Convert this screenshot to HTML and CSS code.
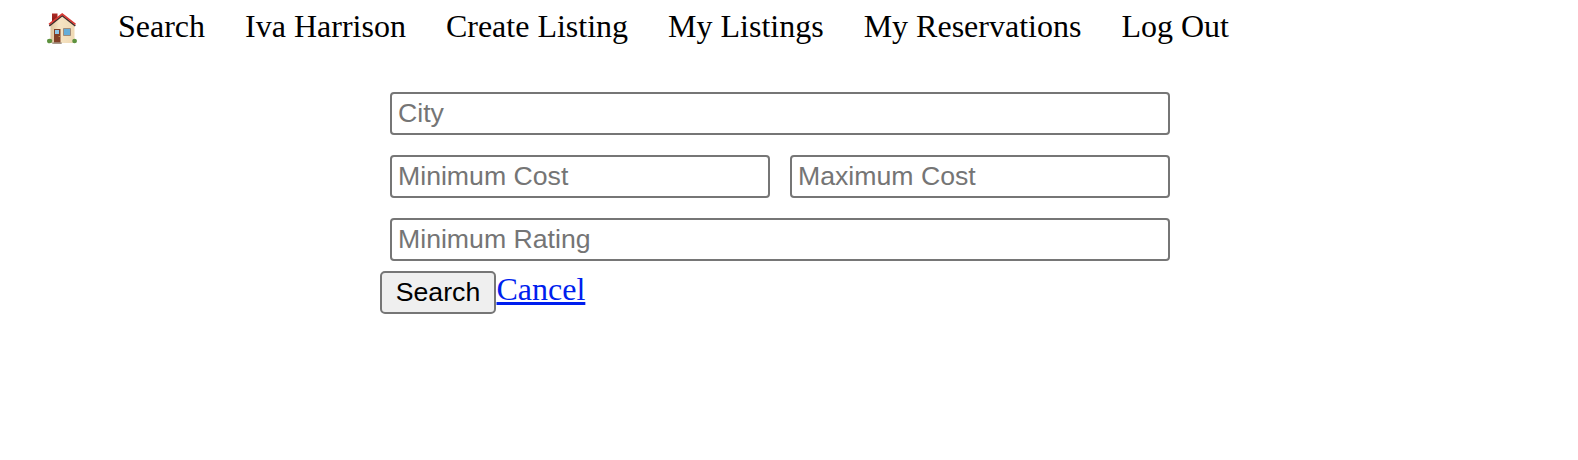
FILE: index.html
```html
<!DOCTYPE html>
<html lang="en">
<head>
<meta charset="utf-8">
<title>Search Listings</title>
<link rel="stylesheet" href="styles.css">
</head>
<body>
<nav class="nav">
  <a class="home" href="#" aria-label="Home">
    <svg class="home-icon" viewBox="0 0 30 31">
      <defs>
        <linearGradient id="wall" x1="0" x2="1" y1="0" y2="0"><stop offset="0" stop-color="#dcc39b"/><stop offset=".35" stop-color="#f6e4c4"/><stop offset="1" stop-color="#efd9b4"/></linearGradient>
        <linearGradient id="chimney" x1="0" x2="0" y1="0" y2="1"><stop offset="0" stop-color="#b02a25"/><stop offset="1" stop-color="#7b1b18"/></linearGradient>
      </defs>
      <path d="M5 .5h5.500v9H5z" fill="url(#chimney)"/>
      <path d="M3.500 12 15.300 2 27.500 12V30H3.500z" fill="url(#wall)"/>
      <ellipse cx="2.600" cy="28" rx="2.600" ry="2.300" fill="#5d923f"/>
      <ellipse cx="27.600" cy="28" rx="2.400" ry="2.300" fill="#5d923f"/>
      <path d="M2.300 12.800 15.200 2.600 28.300 12.800" fill="none" stroke="#3c2d2c" stroke-width="1.500"/>
      <path d="M2 11.400 15.200 1 28.500 11.400" fill="none" stroke="#d93a34" stroke-width="1.600"/>
      <path d="M7 16h6.500V30H7z" fill="#824027"/>
      <path d="M8 17h4v4H8z" fill="#8dc6e8"/>
      <circle cx="12.200" cy="23.500" r=".6" fill="#e7bd62"/>
      <path d="M16.500 15.500h7v7h-7z" fill="#65add9" stroke="#a08c7a" stroke-width="1"/>
      <path d="M5.300 29.300h9.400V31H5.300z" fill="#a7988a"/>
    </svg>
  </a>
  <a href="#">Search</a>
  <a href="#">Iva Harrison</a>
  <a href="#">Create Listing</a>
  <a href="#">My Listings</a>
  <a href="#">My Reservations</a>
  <a href="#">Log Out</a>
</nav>
<form class="search-form">
  <div class="fields">
    <input class="field wide" type="text" placeholder="City">
    <input class="field" type="text" placeholder="Minimum Cost">
    <input class="field" type="text" placeholder="Maximum Cost">
    <input class="field wide" type="text" placeholder="Minimum Rating">
  </div>
  <div class="actions">
    <button class="submit" type="button">Search</button>
    <a class="cancel" href="#">Cancel</a>
  </div>
</form>
</body>
</html>
```
FILE: styles.css
```css
body {
  margin: 0;
  background: #fff;
  font: 32px/36px "Liberation Serif", "Times New Roman", serif;
}
.nav {
  display: flex;
  gap: 40px;
  padding: 8px 0 0 47px;
  height: 83px;
  box-sizing: border-box;
}
.nav a {
  color: #000;
  text-decoration: none;
  white-space: nowrap;
}
.nav .home {
  width: 31px;
  padding-top: 5px;
}
.home-icon {
  display: block;
  width: 30px;
  height: 31px;
}
.search-form {
  width: 800px;
  margin-left: 380px;
}
.fields {
  display: grid;
  grid-template-columns: 1fr 1fr;
  gap: 20px;
  padding: 9px 10px 10px;
}
.field {
  box-sizing: border-box;
  width: 100%;
  min-width: 0;
  height: 43px;
  margin: 0;
  padding: 2px 6px;
  border: 2px solid #767676;
  border-radius: 4px;
  background: #fff;
  font: 26.667px "Liberation Sans", Arial, sans-serif;
}
.field::placeholder {
  color: #757575;
}
.wide {
  grid-column: 1 / -1;
}
.actions {
  display: flex;
  align-items: flex-start;
  gap: 0.5px;
}
.submit {
  box-sizing: border-box;
  width: 116px;
  height: 43px;
  margin: 0;
  padding: 0;
  border: 2px solid #767676;
  border-radius: 5px;
  background: #efefef;
  color: #000;
  font: 26.667px "Liberation Sans", Arial, sans-serif;
}
.cancel {
  color: #001eee;
  text-decoration: underline;
  text-decoration-thickness: 3px;
  text-underline-offset: 2px;
}
```
